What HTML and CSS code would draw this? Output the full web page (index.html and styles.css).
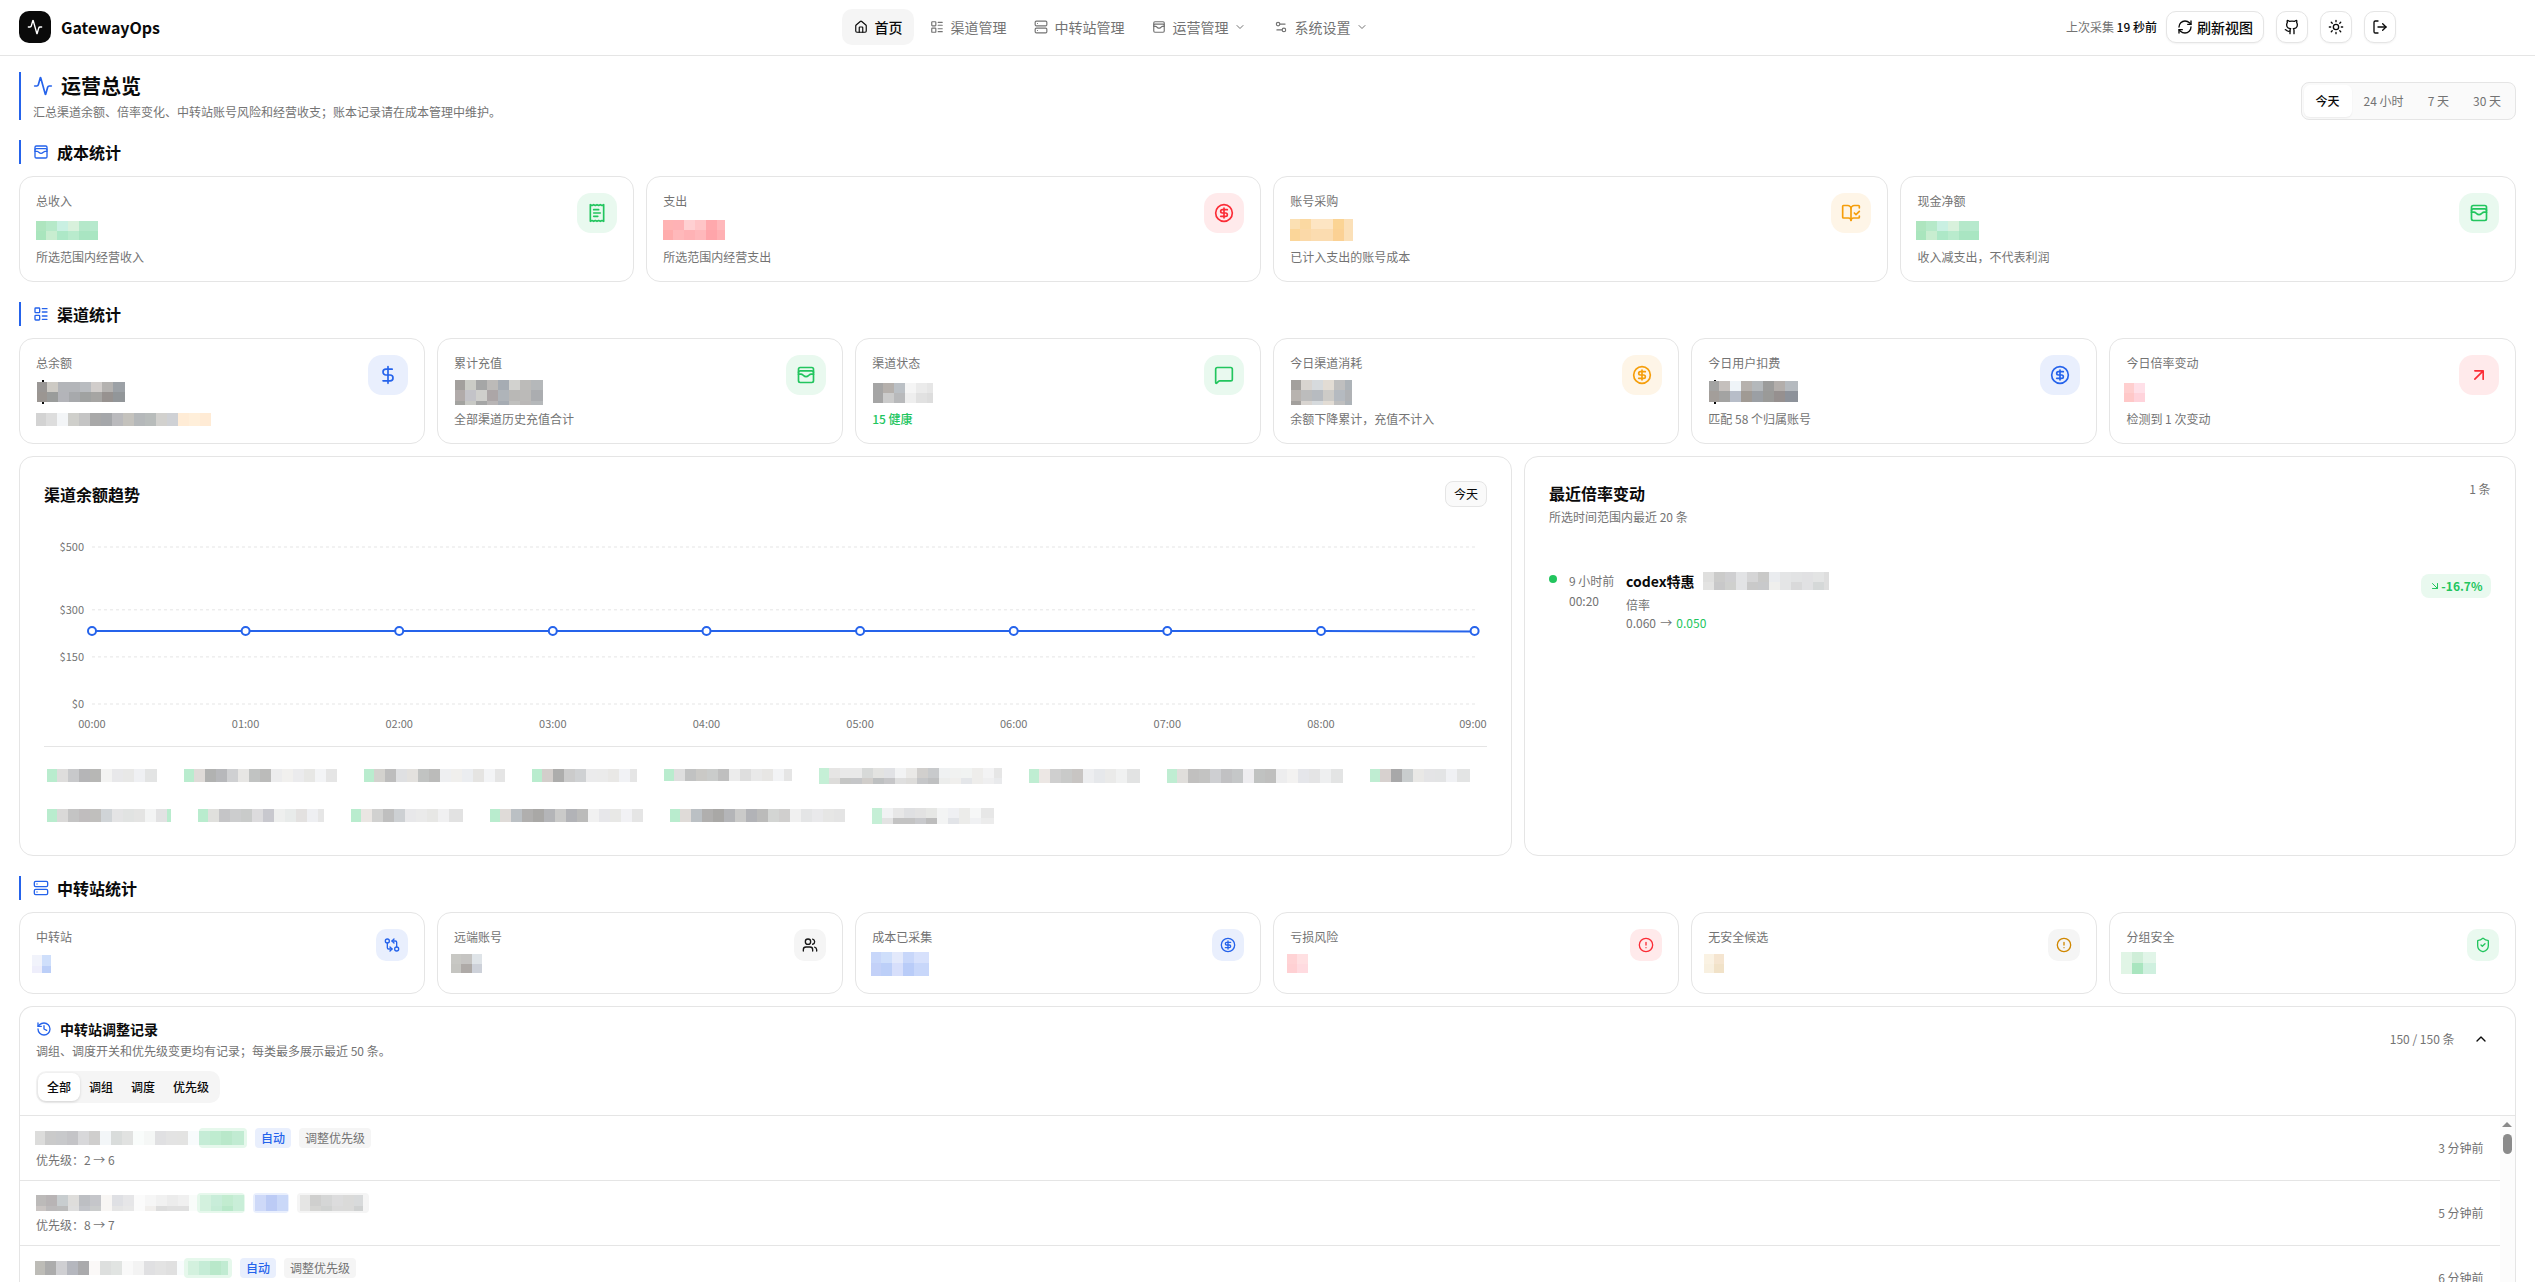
FILE: index.html
```html
<!DOCTYPE html>
<html lang="zh-CN">
<head>
<meta charset="utf-8">
<title>GatewayOps</title>
<link rel="stylesheet" href="styles.css">
</head>
<body>
<svg class="sprite" width="0" height="0" aria-hidden="true">
  <symbol id="activity" viewBox="0 0 24 24"><path d="M22 12h-2.48a2 2 0 0 0-1.93 1.46l-2.35 8.36a.25.25 0 0 1-.48 0L9.24 2.18a.25.25 0 0 0-.48 0l-2.35 8.36A2 2 0 0 1 4.49 12H2"/></symbol>
  <symbol id="home" viewBox="0 0 24 24"><path d="M15 21v-8a1 1 0 0 0-1-1h-4a1 1 0 0 0-1 1v8"/><path d="M3 10a2 2 0 0 1 .709-1.528l7-6a2 2 0 0 1 2.582 0l7 6A2 2 0 0 1 21 10v9a2 2 0 0 1-2 2H5a2 2 0 0 1-2-2z"/></symbol>
  <symbol id="layout-list" viewBox="0 0 24 24"><rect width="7" height="7" x="3" y="3" rx="1"/><rect width="7" height="7" x="3" y="14" rx="1"/><path d="M14 4h7M14 9h7M14 15h7M14 20h7"/></symbol>
  <symbol id="server" viewBox="0 0 24 24"><rect width="20" height="8" x="2" y="2" rx="2"/><rect width="20" height="8" x="2" y="14" rx="2"/><path d="M6 6h.01M6 18h.01"/></symbol>
  <symbol id="wallet" viewBox="0 0 24 24"><rect width="18" height="18" x="3" y="3" rx="2"/><path d="M3 9a2 2 0 0 1 2-2h14a2 2 0 0 1 2 2"/><path d="M3 11h3c.8 0 1.6.3 2.1.9l1.1.9c1.6 1.6 4.1 1.6 5.7 0l1.1-.9c.5-.5 1.3-.9 2.1-.9H21"/></symbol>
  <symbol id="settings" viewBox="0 0 24 24"><path d="M14 17H5M19 7h-9"/><circle cx="17" cy="17" r="3"/><circle cx="7" cy="7" r="3"/></symbol>
  <symbol id="chevron-down" viewBox="0 0 24 24"><path d="m6 9 6 6 6-6"/></symbol>
  <symbol id="chevron-up" viewBox="0 0 24 24"><path d="m18 15-6-6-6 6"/></symbol>
  <symbol id="refresh" viewBox="0 0 24 24"><path d="M3 12a9 9 0 0 1 9-9 9.75 9.75 0 0 1 6.74 2.74L21 8"/><path d="M21 3v5h-5"/><path d="M21 12a9 9 0 0 1-9 9 9.75 9.75 0 0 1-6.74-2.74L3 16"/><path d="M8 16H3v5"/></symbol>
  <symbol id="github" viewBox="0 0 24 24"><path d="M15 22v-4a4.8 4.8 0 0 0-1-3.5c3 0 6-2 6-5.5.08-1.25-.27-2.48-1-3.5.28-1.15.28-2.35 0-3.5 0 0-1 0-3 1.5-2.64-.5-5.36-.5-8 0C6 2 5 2 5 2c-.3 1.15-.3 2.35 0 3.5A5.403 5.403 0 0 0 4 9c0 3.5 3 5.5 6 5.5-.39.49-.68 1.05-.85 1.65-.17.6-.22 1.23-.15 1.85v4"/><path d="M9 18c-4.51 2-5-2-7-2"/></symbol>
  <symbol id="sun" viewBox="0 0 24 24"><circle cx="12" cy="12" r="4"/><path d="M12 2v2M12 20v2m-7.07-17.07 1.41 1.41m11.32 11.32 1.41 1.41M2 12h2m16 0h2M6.34 17.66l-1.41 1.41M19.07 4.93l-1.41 1.41"/></symbol>
  <symbol id="logout" viewBox="0 0 24 24"><path d="m16 17 5-5-5-5"/><path d="M21 12H9"/><path d="M9 21H5a2 2 0 0 1-2-2V5a2 2 0 0 1 2-2h4"/></symbol>
  <symbol id="receipt" viewBox="0 0 24 24"><path d="M4 2v20l2-1 2 1 2-1 2 1 2-1 2 1 2-1 2 1V2l-2 1-2-1-2 1-2-1-2 1-2-1-2 1Z"/><path d="M14 8H8M16 12H8M13 16H8"/></symbol>
  <symbol id="circle-dollar" viewBox="0 0 24 24"><circle cx="12" cy="12" r="10"/><path d="M16 8h-6a2 2 0 1 0 0 4h4a2 2 0 1 1 0 4H8"/><path d="M12 18V6"/></symbol>
  <symbol id="book-check" viewBox="0 0 24 24"><path d="M12 21V7"/><path d="m16 12 2 2 4-4"/><path d="M22 6V4a1 1 0 0 0-1-1h-5a4 4 0 0 0-4 4 4 4 0 0 0-4-4H3a1 1 0 0 0-1 1v13a1 1 0 0 0 1 1h6a3 3 0 0 1 3 3 3 3 0 0 1 3-3h6a1 1 0 0 0 1-1v-1.3"/></symbol>
  <symbol id="dollar" viewBox="0 0 24 24"><path d="M12 2v20"/><path d="M17 5H9.5a3.5 3.5 0 0 0 0 7h5a3.5 3.5 0 0 1 0 7H6"/></symbol>
  <symbol id="message" viewBox="0 0 24 24"><path d="M22 17a2 2 0 0 1-2 2H6.828a2 2 0 0 0-1.414.586l-2.202 2.202A.71.71 0 0 1 2 21.286V5a2 2 0 0 1 2-2h16a2 2 0 0 1 2 2z"/></symbol>
  <symbol id="arrow-ur" viewBox="0 0 24 24"><path d="M7 7h10v10M7 17 17 7"/></symbol>
  <symbol id="arrow-dr" viewBox="0 0 24 24"><path d="m7 7 10 10M17 7v10H7"/></symbol>
  <symbol id="compare" viewBox="0 0 24 24"><circle cx="5" cy="6" r="3"/><path d="M12 6h5a2 2 0 0 1 2 2v7"/><path d="m15 9-3-3 3-3"/><circle cx="19" cy="18" r="3"/><path d="M12 18H7a2 2 0 0 1-2-2V9"/><path d="m9 15 3 3-3 3"/></symbol>
  <symbol id="users" viewBox="0 0 24 24"><path d="M16 21v-2a4 4 0 0 0-4-4H6a4 4 0 0 0-4 4v2"/><path d="M16 3.128a4 4 0 0 1 0 7.744"/><path d="M22 21v-2a4 4 0 0 0-3-3.87"/><circle cx="9" cy="7" r="4"/></symbol>
  <symbol id="alert" viewBox="0 0 24 24"><circle cx="12" cy="12" r="10"/><path d="M12 8v4M12 16h.01"/></symbol>
  <symbol id="shield" viewBox="0 0 24 24"><path d="M20 13c0 5-3.5 7.5-7.66 8.95a1 1 0 0 1-.67-.01C7.5 20.5 4 18 4 13V6a1 1 0 0 1 1-1c2 0 4.5-1.2 6.24-2.72a1.17 1.17 0 0 1 1.52 0C14.51 3.81 17 5 19 5a1 1 0 0 1 1 1z"/><path d="m9 12 2 2 4-4"/></symbol>
  <symbol id="history" viewBox="0 0 24 24"><path d="M3 12a9 9 0 1 0 9-9 9.75 9.75 0 0 0-6.74 2.74L3 8"/><path d="M3 3v5h5"/><path d="M12 7v5l4 2"/></symbol>
</svg>

<header class="topbar">
  <div class="brand"><span class="logo"><svg class="i16"><use href="#activity"/></svg></span><b>GatewayOps</b></div>
  <nav class="nav">
    <a class="active"><svg class="i14"><use href="#home"/></svg>首页</a>
    <a><svg class="i14"><use href="#layout-list"/></svg>渠道管理</a>
    <a><svg class="i14"><use href="#server"/></svg>中转站管理</a>
    <a><svg class="i14"><use href="#wallet"/></svg>运营管理<svg class="i12"><use href="#chevron-down"/></svg></a>
    <a><svg class="i14"><use href="#settings"/></svg>系统设置<svg class="i12"><use href="#chevron-down"/></svg></a>
  </nav>
  <div class="tools">
    <span class="last">上次采集 <b>19 秒前</b></span>
    <button class="btn refresh"><svg class="i16"><use href="#refresh"/></svg>刷新视图</button>
    <button class="btn square"><svg class="i16"><use href="#github"/></svg></button>
    <button class="btn square"><svg class="i16"><use href="#sun"/></svg></button>
    <button class="btn square"><svg class="i16"><use href="#logout"/></svg></button>
  </div>
</header>

<main class="page">
  <div class="page-head">
    <div class="page-title">
      <h1><svg class="i20"><use href="#activity"/></svg>运营总览</h1>
      <p>汇总渠道余额、倍率变化、中转站账号风险和经营收支；账本记录请在成本管理中维护。</p>
    </div>
    <div class="range"><span class="on">今天</span><span>24 小时</span><span>7 天</span><span>30 天</span></div>
  </div>

  <section>
    <h2><svg class="i16"><use href="#wallet"/></svg>成本统计</h2>
    <div class="grid four">
      <article class="stat"><div class="info"><span>总收入</span><div class="value"><i data-x="-.5" data-y="12" data-w="62" data-rows="10:aee5bf,b6e9c9,c9f0e2,d8f1dc,b5e8ca,b6e9cd|9:a9e5bd,c8edd0,ade8c7,b9ebcd,a9e5c2,a9e6c2"></i></div><span>所选范围内经营收入</span></div><em class="chip green"><svg class="i20"><use href="#receipt"/></svg></em></article>
      <article class="stat"><div class="info"><span>支出</span><div class="value"><i data-x="-.5" data-y="11" data-w="62" data-rows="10:ffb3b3,ffb2b5,ffd0d2,ffc5c7,ffa9ad,ffb8bb|10:ffacac,ffb8ba,ffb2b5,ffb8bb,ffa5aa,ffb0b3"></i></div><span>所选范围内经营支出</span></div><em class="chip red"><svg class="i20"><use href="#circle-dollar"/></svg></em></article>
      <article class="stat"><div class="info"><span>账号采购</span><div class="value"><i data-x="-.5" data-y="10" data-w="63" data-rows="10:fbe0b3,fbd9a2,fde5c3,fde5c3,fbd494,fbe0b8|12:fbd699,fbd9a8,fbdcb0,fbdcb0,fbd194,fbe0b8"></i></div><span>已计入支出的账号成本</span></div><em class="chip amber"><svg class="i20"><use href="#book-check"/></svg></em></article>
      <article class="stat"><div class="info"><span>现金净额</span><div class="value"><i data-x="-1" data-y="12" data-w="63" data-rows="10:aee5bf,b6e9c9,c9f0e2,d8f1dc,b5e8ca,b6e9cd|9:a9e5bd,c8edd0,ade8c7,b9ebcd,a9e5c2,a9e6c2"></i></div><span>收入减支出，不代表利润</span></div><em class="chip green"><svg class="i20"><use href="#wallet"/></svg></em></article>
    </div>
  </section>

  <section>
    <h2><svg class="i16"><use href="#layout-list"/></svg>渠道统计</h2>
    <div class="grid six">
      <article class="stat"><div class="info"><span>总余额</span><div class="value stub"><i data-x=".5" data-y="11" data-w="88" data-rows="10:9a9795,cdcac4,b3b5b9,b3b5b9,b9bcc0,d1cdcb,b4b2b0,9ca1a6|10:9b9692,9a9c9b,b3b4b9,a7a9ac,a0a2a1,a6a5a3,979290,929699"></i></div><i data-x="-.5" data-y="2" data-w="175" data-rows="13:d3d3d3,dddddd,f3f5f7,cfcfcb,c4c4c4,a8a8a8,a5a7aa,bababd,c4c2bd,b5b8ba,b8bcbb,d2d1ce,cfd1d5,ffecd6,ffefda,ffebd5"></i></div><em class="chip blue"><svg class="i20"><use href="#dollar"/></svg></em></article>
      <article class="stat"><div class="info"><span>累计充值</span><div class="value"><i data-x=".5" data-y="9" data-w="88" data-rows="10:a3a09d,cbccc6,a5a6a6,bcbab8,a6acb3,d2d2cf,bcbbb9,b5b8ba|11:b1abaa,c3c3c8,cfcfcc,aca6a7,afb4b9,b9b8b6,bbbab8,abadb0|4:a3a3a0,c8c9c5,a5a6a6,b8b5b5,a6acb3,c0c0be,bab8b7,b5b8ba"></i></div><span>全部渠道历史充值合计</span></div><em class="chip green"><svg class="i20"><use href="#wallet"/></svg></em></article>
      <article class="stat"><div class="info"><span>渠道状态</span><div class="value"><i data-x=".5" data-y="12" data-w="60" data-rows="10:a5a5a5,b5b0ac,bbc0c5,f5f5f5,ebebeb,e6e6e6|10:a5a5a5,cbcbcb,b8b9bb,eeeeee,e1e1e1,dddddd"></i></div><span class="ok">15 健康</span></div><em class="chip green"><svg class="i20"><use href="#message"/></svg></em></article>
      <article class="stat"><div class="info"><span>今日渠道消耗</span><div class="value"><i data-x=".5" data-y="9" data-w="61" data-rows="10:a3a09d,d8d4d0,d6dadd,e2dcd4,bfbfbf,adb3b8|11:b8b3af,bcbcbc,b7bbc0,cdcbc7,b5bac0,b0b2b5|4:a3a09d,d8d4d0,d6dadd,e2dcd4,bfbfbf,adb3b8"></i></div><span>余额下降累计，充值不计入</span></div><em class="chip amber"><svg class="i20"><use href="#circle-dollar"/></svg></em></article>
      <article class="stat"><div class="info"><span>今日用户扣费</span><div class="value stub"><i data-x=".5" data-y="10" data-w="89" data-rows="10:a3a3a2,c5c0bd,eff4f8,b6b1ad,b4b8bb,9c9c9b,b3aeab,b5babf|11:a39e9a,a3a3a2,b7bdc8,a09a94,9b9fa4,9a9a98,96908f,8d929a"></i></div><span>匹配 58 个归属账号</span></div><em class="chip blue"><svg class="i20"><use href="#circle-dollar"/></svg></em></article>
      <article class="stat"><div class="info"><span>今日倍率变动</span><div class="value"><i data-x="-2.5" data-y="12" data-w="21" data-rows="10:ffcfcf,ffe0e8|9:ffc8c8,ffd3db"></i></div><span>检测到 1 次变动</span></div><em class="chip red"><svg class="i20"><use href="#arrow-ur"/></svg></em></article>
    </div>
    <div class="panels">
      <article class="card trend">
        <div class="card-head"><h3>渠道余额趋势</h3><span class="pill">今天</span></div>
        <svg class="chart" viewBox="0 0 1443 224" width="1443" height="224">
          <g class="gridlines"><path d="M48 25H1431M48 87.8H1431M48 134.9H1431M48 182H1431"/></g>
          <g class="ylab"><text x="40" y="29">$500</text><text x="40" y="92">$300</text><text x="40" y="139">$150</text><text x="40" y="186">$0</text></g>
          <path class="line" d="M48 109H1277L1431 109.4"/>
          <g class="dots"><circle cx="48" cy="109" r="4"/><circle cx="201.6" cy="109" r="4"/><circle cx="355.2" cy="109" r="4"/><circle cx="508.8" cy="109" r="4"/><circle cx="662.5" cy="109" r="4"/><circle cx="816.1" cy="109" r="4"/><circle cx="969.7" cy="109" r="4"/><circle cx="1123.3" cy="109" r="4"/><circle cx="1277" cy="109" r="4"/><circle cx="1430.6" cy="109" r="4"/></g>
          <g class="xlab"><text x="48" y="206">00:00</text><text x="201.6" y="206">01:00</text><text x="355.2" y="206">02:00</text><text x="508.8" y="206">03:00</text><text x="662.5" y="206">04:00</text><text x="816.1" y="206">05:00</text><text x="969.7" y="206">06:00</text><text x="1123.3" y="206">07:00</text><text x="1277" y="206">08:00</text><text x="1429" y="206">09:00</text></g>
        </svg>
        <div class="legend">
          <div>
            <i data-w="110" data-rows="13:b9ecce,dedddc,c8c9cb,b5b5b7,b7b7b5,f3f3f2,e8e8ea,e8e8e7,eff0f3,e3e4e4"></i>
            <i data-w="153" data-rows="13:b9ecce,dfdbd8,b1b2b1,b7b8bb,cfd0d2,e7e6e4,c1c3c2,bbbbba,ececed,f1f0ee,ebebed,e7e7e5,f3f4f6,e5e5e5"></i>
            <i data-w="141" data-rows="13:b9ecce,d3d2ce,bdbdbd,dfe0e2,e3e1de,c1c3c2,bbbbba,eeeff1,f0efed,ebedf0,e5e4e2,f3f4f6,e5e5e5"></i>
            <i data-w="105" data-rows="13:b9ecce,d3cecb,adadac,cbcbcb,cfd1d3,ebebec,ebebeb,e9e8e6,f1f2f5,e5e5e5"></i>
            <i data-w="128" data-rows="12:b9ecce,dedede,c1c2c2,cac9c6,cacccb,bfbfbf,ececec,dedede,e9e9e9,e7e6e4,f2f3f5,e5e5e5"></i>
            <i data-y="-1" data-w="183" data-rows="10:c5efd6,e6e5e4,e9e9e9,e9e9e9,d7d9d8,e3e3e1,e1e2e5,f2f3f4,eae9e7,d1cfcd,c8cacc,eff1f2,f1f2f1,f1f3f2,eeedeb,f3f3f4,e6e6e6|6:c5efd6,dddcda,c5c6c5,c5c6c8,d0cdca,bec0c1,c6c6c8,dfdfdf,dddcda,c5c6c8,bfc0c1,ecedec,f0efed,e4e6e9,eeedeb,efeff0,e9eaec"></i>
            <i data-w="111" data-rows="14:bfedd2,ece7e4,cfcfcf,c9cac9,c8c5c3,edeef0,e6e8eb,eaeae9,f0f1f1,e2e3e3"></i>
            <i data-w="176" data-rows="14:bfedd2,e0dedb,c1c0bf,c3c3c2,cecfd2,c1c1c3,c5c7c8,eeedf0,c0c2c1,bfbfbe,ededee,f3f2f1,e5e6ea,e4e4e5,eeeff0,e3e4e4"></i>
            <i data-w="100" data-rows="13:bfedd2,d7d1cf,a8a8a9,c9cdce,e9e8e6,e4e4e6,e3e4e5,f0f1f4,e3e4e4"></i>
          </div>
          <div>
            <i data-w="124" data-rows="13:b9ecce,dad9d8,c4c4c4,c0bdbe,c0bfbd,d0d4d7,e4e4e5,e1e3e2,e4e4e3,f3f4f4,e2e2e3,b9ecce"></i>
            <i data-w="126" data-rows="13:b9ecce,e0e0dd,c5c5c7,cccdce,c9cbca,dcdbdd,c8c8ce,eeefee,e8ebea,e3e1e0,eeeff2,e6e6e6"></i>
            <i data-w="112" data-rows="13:b9ecce,eae6e3,d1d1d0,bfbfbf,cdd0d3,e8e8ea,eaeaea,e7e7e5,f0f0f1,e2e2e2"></i>
            <i data-w="153" data-rows="13:b9ecce,dfdbd8,bbc0c4,b0afae,a9a8a6,b4b5b8,cacac9,b2b3b7,bbbbba,f1f1f1,e7e7ea,e8e8e6,f1f1f4,e5e5e5"></i>
            <i data-w="175" data-rows="13:b9ecce,dfdbd8,bbc0c4,b0afae,a9a8a6,b4b5b8,cacac9,b2b3b7,bbbbba,d3d5d3,d0cfce,f0f0f0,e4e5e6,e9e9eb,e6e6e5,e4e4e4"></i>
            <i data-y="-1" data-w="122" data-rows="10:c5efd6,f1f2f3,e7e7e7,dfe0e2,e2e2e2,e6e7e5,f3f4f4,eff0f3,ececea,f6f7f7,e7e7e7|6:c5efd6,e3e3e3,c3c3c3,c3c3c3,c8c9cc,bdbdbd,f3f4f4,e2e4e8,ececea,f0f1f3,ececec"></i>
          </div>
        </div>
      </article>
      <article class="card changes">
        <div class="card-head"><div><h3>最近倍率变动</h3><p>所选时间范围内最近 20 条</p></div><span class="count">1 条</span></div>
        <div class="change">
          <span class="dot"></span>
          <div class="when"><span>9 小时前</span><span>00:20</span></div>
          <div class="what">
            <div class="name"><b>codex特惠</b><i data-w="126" data-first="11" data-rows="10:dfdfde,cbcbca,cfcfd1,e2e3e5,d5d5d6,c9c9c8,eaecef,e4e5e6,e2e3e4,e1e1e3,e3e4e4,dedede|8:e3e3e2,c8c8c9,cfd0ce,e2e3e5,c9c9c9,c8c9cb,efefed,e4e5e6,d9d9da,e1e1e3,d5d8d8,dedede"></i></div>
            <span>倍率</span>
            <span class="ratio">0.060 → <span class="ok">0.050</span></span>
          </div>
          <span class="delta"><svg class="i12"><use href="#arrow-dr"/></svg>-16.7%</span>
        </div>
      </article>
    </div>
  </section>

  <section>
    <h2><svg class="i16"><use href="#server"/></svg>中转站统计</h2>
    <div class="grid six small">
      <article class="stat"><div class="info"><span>中转站</span><div class="value"><i data-x="-4" data-y="10" data-w="19" data-rows="11:f1f3fb,cfdffb|7:eeeefb,bccff8"></i></div></div><em class="chip blue"><svg class="i16"><use href="#compare"/></svg></em></article>
      <article class="stat"><div class="info"><span>远端账号</span><div class="value"><i data-x="-3.5" data-y="9" data-w="31" data-rows="10:c8c8c4,c5c4c2,dfe4e8|9:c5c5c1,aeaaa7,cdd1d9"></i></div></div><em class="chip plain"><svg class="i16"><use href="#users"/></svg></em></article>
      <article class="stat"><div class="info"><span>成本已采集</span><div class="value"><i data-x="-1" data-y="7" data-w="58" data-rows="11:c8d7fa,cfdffb,e3e9fb,c8d7fa,d7e1fc|13:c3d1f8,bccff8,d7dffb,b9ccf8,c8d7fa"></i></div></div><em class="chip blue"><svg class="i16"><use href="#circle-dollar"/></svg></em></article>
      <article class="stat"><div class="info"><span>亏损风险</span><div class="value"><i data-x="-3.5" data-y="9" data-w="21" data-rows="10:ffd3d5,ffe0e2|9:ffd0d3,ffdbe0"></i></div></div><em class="chip red"><svg class="i16"><use href="#alert"/></svg></em></article>
      <article class="stat"><div class="info"><span>无安全候选</span><div class="value"><i data-x="-4" data-y="9" data-w="20" data-rows="10:faf2e3,f5e5d0|9:f8f0e0,f1e2c8"></i></div></div><em class="chip ochre"><svg class="i16"><use href="#alert"/></svg></em></article>
      <article class="stat"><div class="info"><span>分组安全</span><div class="value"><i data-x="-5" data-y="7" data-w="35" data-first="11" data-rows="11:e1f5e6,cfeed8,e1f5e8|11:e1f5e6,a9e5bf,cff0df"></i></div></div><em class="chip green"><svg class="i16"><use href="#shield"/></svg></em></article>
    </div>
    <article class="card records">
      <div class="rec-head">
        <div class="rec-title">
          <h4><svg class="i16"><use href="#history"/></svg>中转站调整记录</h4>
          <p>调组、调度开关和优先级变更均有记录；每类最多展示最近 50 条。</p>
        </div>
        <div class="rec-count">150 / 150 条<span><svg class="i16"><use href="#chevron-up"/></svg></span></div>
      </div>
      <div class="tabs"><span class="on">全部</span><span>调组</span><span>调度</span><span>优先级</span></div>
      <div class="rec-body">
        <div class="rows">
          <div class="row">
            <div><div class="tags"><i data-x="-1" data-w="164" data-rows="14:dcdcdb,cacaca,c8c9cb,c4c4c7,d8d8da,cfcecd,f3f6f8,d9dcdb,e1e2e1,f9fcfb,f5f7f6,e0e0e2,e3e3e3,e3e3e2,f8fbfc"></i><span class="tag g"><i data-w="45" data-first="11" data-rows="14:c5ecd6,bfecd0,b9e8ca,c1ebd2"></i></span><span class="tag b">自动</span><span class="tag n">调整优先级</span></div><p>优先级：2 → 6</p></div><time>3 分钟前</time>
          </div>
          <div class="row">
            <div><div class="tags"><i data-w="161" data-rows="11:bcbab9,b8b4b5,c8cdcf,dedddb,bdbfc3,c5c6ca,f8f6f4,dfe0e4,e6e6e8,fbfbfb,f6f6f6,f1f1f1,ececec,f0f0f0,f9fcfa|5:cac5c3,bcbabb,bcbcbc,dedede,c3c5ca,cacccc,f8f6f4,e5e5e5,e8e8e8,fbfbfb,f1efed,dddddd,e0e0e0,e0e0e0,f9fcfa"></i><span class="tag g"><i data-x="3" data-w="44" data-first="11" data-rows="11:d3f1de,c8edd9,c2ecd0,c9eed8|5:d3f1de,c5ecd6,b8e8c9,c9eed8"></i></span><span class="tag b"><i data-x="2" data-w="33" data-first="11" data-rows="16:ced9f8,bccbf5,cad8f8"></i></span><span class="tag n"><i data-x="3" data-w="63" data-rows="11:e5e5e4,cfcfce,d5d6d6,dcdcdd,dadad9,d8dadb|5:e5e5e4,d5d5d3,d0d2d1,dadada,dadad9,cfd1d1"></i></span></div><p>优先级：8 → 7</p></div><time>5 分钟前</time>
          </div>
          <div class="row">
            <div><div class="tags"><i data-x="-1" data-w="149" data-rows="14:bdbcb7,acacac,cfcfd2,b5b7be,aaaaac,fbf9f8,dddfde,e1e4e2,f9f9f9,f3f3f3,e0e0e2,e3e3e3,e0e0e0,f9fcfd"></i><span class="tag g"><i data-x="4" data-w="40" data-first="11" data-rows="14:d3f1de,c5ecd6,b9e8ca,c1ebd2"></i></span><span class="tag b">自动</span><span class="tag n">调整优先级</span></div><p>&nbsp;</p></div><time>6 分钟前</time>
          </div>
        </div>
        <div class="scroll"><span class="up"></span><span class="thumb"></span></div>
      </div>
    </article>
  </section>
</main>
<script src="mosaic.js"></script>
</body>
</html>
```
FILE: styles.css
```css
* { box-sizing: border-box; margin: 0; padding: 0; }
html, body { height: 1282px; overflow: hidden; }
body {
  background: #fff;
  color: #0a0a0a;
  font: 12px/16px "Noto Sans CJK SC", "Noto Sans", sans-serif;
}
.sprite { display: none; }
svg { fill: none; stroke: currentColor; stroke-width: 2; stroke-linecap: round; stroke-linejoin: round; flex: none; }
.i12 { width: 12px; height: 12px; }
.i14 { width: 14px; height: 14px; }
.i16 { width: 16px; height: 16px; }
.i20 { width: 20px; height: 20px; }
i, em { font-style: normal; }
p { color: #737373; }
.ok { color: #22c55e; }

/* Top bar */
.topbar {
  height: 56px;
  padding: 0 139px 1px 19px;
  border-bottom: 1px solid #e5e5e5;
  display: flex;
  align-items: center;
  justify-content: space-between;
}
.brand { display: flex; align-items: center; gap: 10px; font-size: 16px; line-height: 24px; }
.brand b { font-weight: 600; }
.logo { width: 32px; height: 32px; border-radius: 10px; background: #0a0a0a; color: #fff; display: flex; align-items: center; justify-content: center; }
.nav { display: flex; gap: 4px; margin-right: 3px; }
.nav a { height: 36px; padding: 0 12px; border-radius: 10px; display: flex; align-items: center; gap: 6px; font-size: 14px; color: #737373; }
.nav a.active { background: #f5f5f5; color: #0a0a0a; font-weight: 500; }
.tools { display: flex; align-items: center; gap: 12px; }
.last { color: #737373; margin-right: -3px; }
.last b { color: #0a0a0a; font-weight: 500; }
.btn {
  height: 32px; border: 1px solid #e5e5e5; border-radius: 10px; background: #fff; color: #0a0a0a;
  font: 500 14px/20px "Noto Sans CJK SC", sans-serif;
  display: flex; align-items: center; justify-content: center; gap: 4px;
  box-shadow: 0 1px 2px rgba(0, 0, 0, .05);
}
.refresh { padding: 0 10px; }
.square { width: 32px; }

/* Page */
.page { padding: 16px 19.5px 0 19px; display: flex; flex-direction: column; gap: 20px; }
.page-head { display: flex; justify-content: space-between; align-items: flex-end; }
.page-title { border-left: 2px solid #2563eb; padding-left: 12px; height: 48px; }
h1 { display: flex; align-items: center; gap: 8px; font-size: 20px; line-height: 28px; font-weight: 600; margin-bottom: 4px; }
h1 svg, h2 svg, h4 svg { color: #2563eb; }
h2 { display: flex; align-items: center; gap: 8px; height: 24px; font-size: 16px; font-weight: 600; border-left: 2px solid #2563eb; padding-left: 12px; margin-bottom: 12px; }
.range { height: 38px; padding: 2px 1.5px; border: 1px solid #e5e5e5; border-radius: 8px; background: #fafafa; display: flex; color: #737373; }
.range span { height: 32px; line-height: 32px; padding: 0 12px; border-radius: 6px; }
.range .on { background: #fff; color: #0a0a0a; font-weight: 500; box-shadow: 0 1px 2px rgba(0, 0, 0, .06); }

/* Stat cards */
.grid { display: grid; gap: 12px; }
.four { grid-template-columns: repeat(4, 1fr); }
.six { grid-template-columns: repeat(6, 1fr); }
.stat { height: 106px; padding: 16px; border: 1px solid #e5e5e5; border-radius: 14px; display: flex; justify-content: space-between; }
.info { display: flex; flex-direction: column; color: #737373; }
.value { height: 40px; }
.info .ok { color: #22c55e; font-weight: 500; }
.chip { width: 40px; height: 40px; border-radius: 14px; display: flex; align-items: center; justify-content: center; }
.small .stat { height: 82px; }
.small .value { height: 32px; }
.small .chip { width: 32px; height: 32px; border-radius: 10px; }
.green { background: #e9f9ef; color: #22c55e; }
.red { background: #ffeaeb; color: #fb2c36; }
.amber { background: #fef5e7; color: #f59e0b; }
.blue { background: #e9effd; color: #2563eb; }
.plain { background: #f5f5f5; color: #171717; }
.ochre { background: #f5f5f5; color: #d08700; }
.stub { background: linear-gradient(#0a0a0a, #0a0a0a) 6px 9px / 2px 24px no-repeat; }

/* Pixelated value blocks */
.mosaic { display: block; flex: none; }
.mosaic span { display: flex; }
.mosaic b { flex: 0 0 11px; }
.mosaic b:last-child { flex: 1; }

/* Panels */
.card { border: 1px solid #e5e5e5; border-radius: 14px; }
.panels { display: grid; grid-template-columns: 1492.5fr 991.5fr; gap: 12px; margin-top: 12px; }
.panels .card { height: 400px; padding: 24px; }
.card-head { display: flex; justify-content: space-between; align-items: flex-start; }
h3 { font-size: 16px; line-height: 26px; font-weight: 600; }
.pill { height: 26px; line-height: 24px; padding: 0 8px; border: 1px solid #e5e5e5; border-radius: 8px; background: #fafafa; }
.chart { display: block; margin-top: 15px; overflow: visible; }
.chart text { fill: #737373; stroke: none; font-size: 11px; }
.gridlines { stroke: #e5e5e5; stroke-width: 1; stroke-dasharray: 3 3; stroke-linecap: butt; }
.ylab { text-anchor: end; }
.xlab { text-anchor: middle; }
.line { stroke: #2563eb; }
.dots { stroke: #2563eb; fill: #fff; }
.legend { border-top: 1px solid #e5e5e5; padding: 22px 0 0 3px; display: flex; flex-direction: column; gap: 26px; }
.legend > div { display: flex; gap: 27px; height: 14px; }

.changes h3 { line-height: 24px; }
.changes .card-head p { margin-top: 4px; }
.count { color: #737373; }
.change { display: flex; margin-top: 47px; color: #737373; }
.dot { width: 8px; height: 8px; border-radius: 50%; background: #22c55e; margin-top: 3px; }
.when { margin-left: 12px; width: 57px; display: flex; flex-direction: column; gap: 4px; padding-top: 1px; }
.what { display: flex; flex-direction: column; flex: 1; line-height: 18px; }
.name { display: flex; gap: 8px; height: 24px; color: #0a0a0a; font-size: 14px; }
.name > b { font-weight: 600; }
.ratio { word-spacing: 1.5px; }
.delta { height: 24px; padding: 0 8px; border-radius: 8px; background: #e9f9ef; color: #22c55e; font-weight: 600; display: flex; align-items: center; gap: .5px; margin-top: 2px; }

/* Records */
.records { margin-top: 12px; height: 276px; overflow: hidden; border-bottom: 0; border-radius: 14px 14px 0 0; }
.rec-head { display: flex; justify-content: space-between; padding: 12px 16px 0; }
h4 { display: flex; align-items: center; gap: 8px; font-size: 14px; line-height: 20px; font-weight: 600; margin-bottom: 4px; }
.rec-title { height: 39px; }
.rec-count { display: flex; align-items: center; color: #737373; gap: 8px; }
.rec-count span { width: 36px; display: flex; justify-content: center; color: #0a0a0a; }
.tabs { width: max-content; height: 32px; margin: 13px 16px 12px; padding: 2px; border-radius: 10px; background: #f5f5f5; display: flex; font-weight: 500; }
.tabs span { height: 28px; line-height: 28px; padding: 0 9px; border-radius: 8px; }
.tabs .on { background: #fff; box-shadow: 0 1px 3px rgba(0, 0, 0, .14); }
.rec-body { display: flex; border-top: 1px solid #e5e5e5; height: 167px; overflow: hidden; }
.rows { flex: 1; }
.row { height: 65px; padding: 12px 16px; border-bottom: 1px solid #e5e5e5; display: flex; justify-content: space-between; align-items: center; color: #737373; }
.tags { display: flex; align-items: center; height: 20px; margin-bottom: 4px; }
.tag { height: 20px; line-height: 20px; padding: 0 6px; border-radius: 4px; margin-right: 8px; display: flex; align-items: center; }
.tag.g { width: 48px; padding: 0; background: #e6f8ec; }
.tag.b { min-width: 36px; background: #e9effd; color: #2563eb; font-weight: 500; }
.tag.n { min-width: 72px; background: #f5f5f5; }
.tag:has(i) { padding: 0; }
.scroll { width: 15px; background: #fcfcfc; display: flex; flex-direction: column; align-items: center; padding-top: 6px; }
.up { border: 5px solid transparent; border-top: 0; border-bottom: 5px solid #8b8b8b; }
.thumb { width: 9px; height: 20px; border-radius: 5px; background: #8b8b8b; margin-top: 7px; }
```
FILE: mosaic.js
```js
// Expands data-rows ("height:colour,colour|height:...") into pixelated blocks.
document.querySelectorAll('i[data-rows]').forEach(function (el) {
  el.className = 'mosaic';
  el.style.width = el.dataset.w + 'px';
  if (el.dataset.x) el.style.marginLeft = el.dataset.x + 'px';
  if (el.dataset.y) el.style.marginTop = el.dataset.y + 'px';
  el.dataset.rows.split('|').forEach(function (part) {
    var p = part.split(':');
    var row = document.createElement('span');
    row.style.height = p[0] + 'px';
    p[1].split(',').forEach(function (colour, n) {
      var cell = document.createElement('b');
      cell.style.background = '#' + colour;
      if (n === 0) cell.style.flexBasis = (el.dataset.first || 10) + 'px';
      row.appendChild(cell);
    });
    el.appendChild(row);
  });
});
```
